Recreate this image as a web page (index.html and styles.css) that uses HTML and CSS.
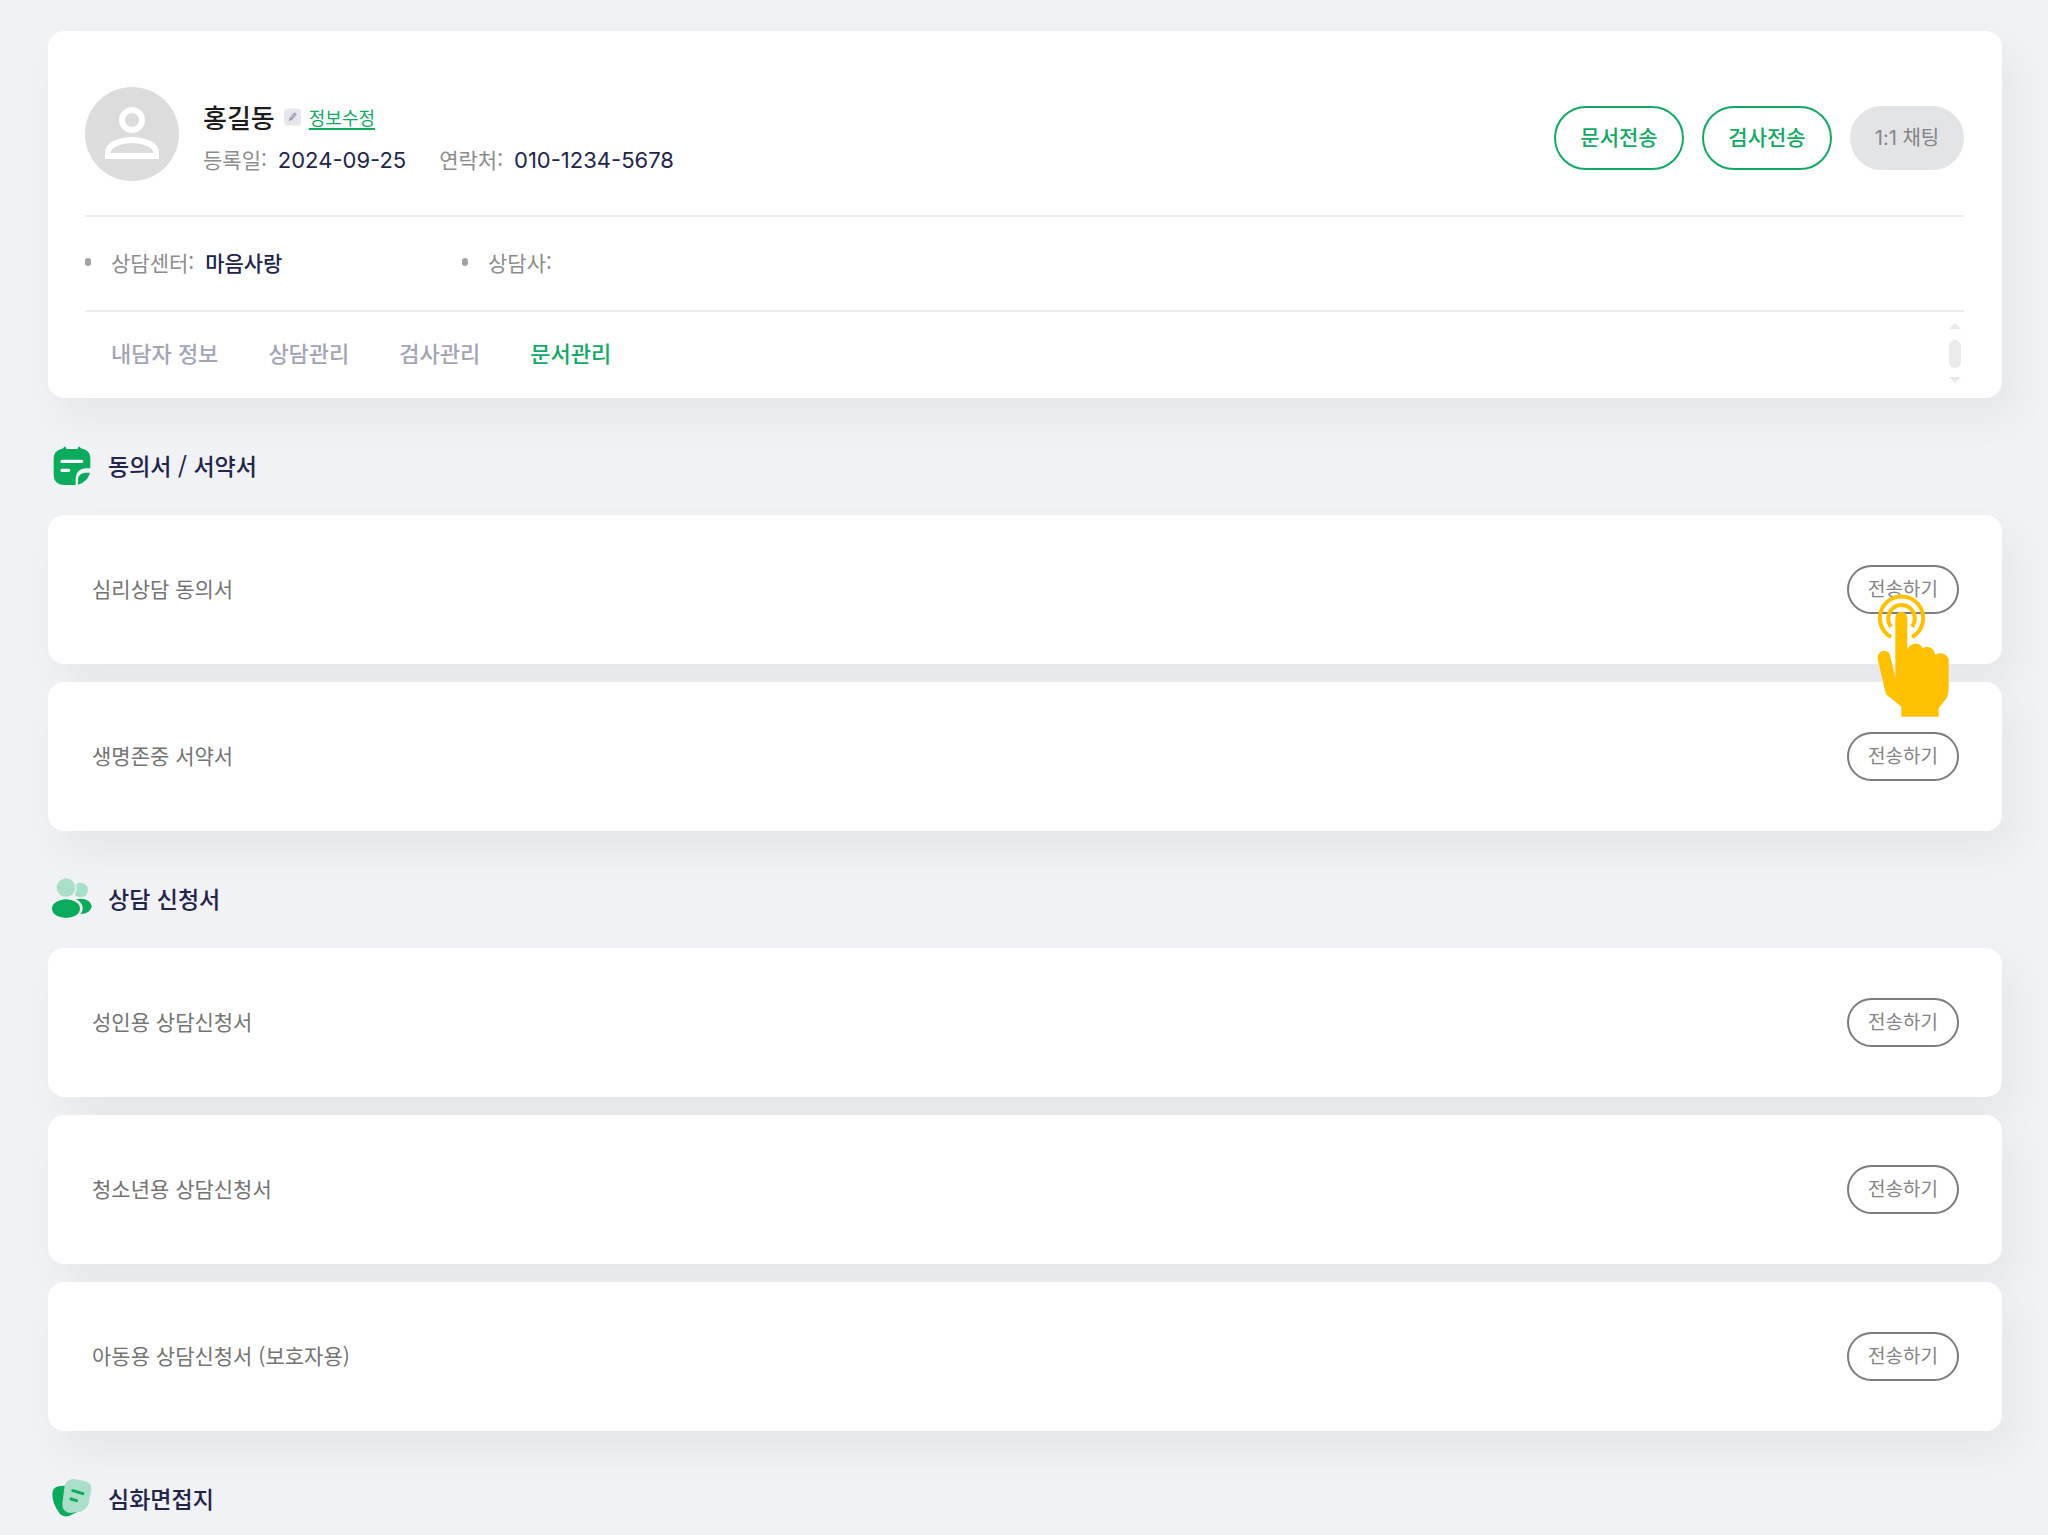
FILE: index.html
```html
<!DOCTYPE html>
<html lang="ko">
<head>
<meta charset="utf-8">
<meta name="viewport" content="width=device-width, initial-scale=1">
<title>문서관리</title>
<link rel="stylesheet" href="styles.css">
</head>
<body>
<main class="page">
  <header class="client card">
    <div class="profile">
      <svg class="avatar" viewBox="0 0 94 94" aria-hidden="true">
        <circle cx="47" cy="47" r="47" fill="#dcdcdc"/>
        <circle cx="47" cy="33" r="10" fill="none" stroke="#fff" stroke-width="6"/>
        <path d="M23 69v-4c0-8 14-12 24-12s24 4 24 12v4z" fill="none" stroke="#fff" stroke-width="6"/>
      </svg>
      <div class="profile-text">
        <div class="name-line">
          <h1 class="name">홍길동</h1>
          <svg class="edit-icon" viewBox="0 0 18 18" aria-hidden="true">
            <rect width="18" height="18" rx="4" fill="#e6e6ec"/>
            <path d="M5 13.500l1-4 5-5.500 2.500 2-5 6z" fill="#9d9db4"/>
            <path d="M7 10l4-4" stroke="#dcdce6" stroke-width="1"/>
          </svg>
          <a class="edit-link" href="#edit">정보수정</a>
        </div>
        <dl class="meta">
          <div class="pair"><dt>등록일:</dt><dd class="number">2024-09-25</dd></div>
          <div class="pair"><dt>연락처:</dt><dd class="number">010-1234-5678</dd></div>
        </dl>
      </div>
      <div class="actions">
        <button class="pill" type="button">문서전송</button>
        <button class="pill" type="button">검사전송</button>
        <button class="pill pill-muted" type="button">1:1 채팅</button>
      </div>
    </div>
    <dl class="center-info">
      <div class="pair bullet"><dt>상담센터:</dt><dd>마음사랑</dd></div>
      <div class="pair bullet"><dt>상담사:</dt><dd></dd></div>
    </dl>
    <div class="tab-row">
      <nav class="tabs">
        <a href="#client">내담자 정보</a>
        <a href="#counsel">상담관리</a>
        <a href="#exam">검사관리</a>
        <a class="active" href="#docs" aria-current="page">문서관리</a>
      </nav>
      <svg class="scroll" viewBox="0 0 12 62" aria-hidden="true">
        <path d="M0 7l6-6 6 6z" fill="#e9e9e9"/>
        <rect y="18" width="12" height="28" rx="6" fill="#e9ebea"/>
        <path d="M0 55h12l-6 6z" fill="#e9e9e9"/>
      </svg>
    </div>
  </header>

  <section>
    <h2 class="section-title">
      <svg class="section-icon" viewBox="36 44 120 120" aria-hidden="true">
        <path d="M70 54l2-4q3-3 5 1l3 5h32l3-5q2-4 5-1l2 4q29 6 29 28v32h-13q-29 1-31 30v20H72q-31-1-31-31V84q0-24 29-30z" fill="#0aab5c"/>
        <path d="M150 127h-16q-18 2-20 20v16q28-8 36-36z" fill="#0aab5c"/>
        <path d="M66 93h59M66 120h20" stroke="#fff" stroke-width="10" stroke-linecap="round"/>
      </svg>
      <span>동의서 / 서약서</span>
    </h2>
    <ul class="docs">
      <li class="doc card"><span class="doc-name">심리상담 동의서</span>
        <div class="send-wrap">
          <button class="send" type="button">전송하기</button>
          <svg class="pointer" viewBox="285 281 225 375" aria-hidden="true">
            <path d="M330 413a65 65 0 1 1 63 0" fill="none" stroke="#ffc000" stroke-width="12"/>
            <path d="M330 382a40 40 0 1 1 63 0" fill="none" stroke="#ffc000" stroke-width="12"/>
            <path d="M343 355a18 18 0 0 1 36 0v97c7-23 37-27 46-5 11-8 34-5 38 20 17-12 38 0 40 15v85q0 20-8 32l-22 27v26H361v-30l-46-37-25-105c-3-28 31-34 37-13l16 70z" fill="#ffc000"/>
          </svg>
        </div>
      </li>
      <li class="doc card"><span class="doc-name">생명존중 서약서</span><button class="send" type="button">전송하기</button></li>
    </ul>
  </section>

  <section>
    <h2 class="section-title">
      <svg class="section-icon" viewBox="36 54 120 120" aria-hidden="true">
        <ellipse cx="122" cy="90" rx="22" ry="22" fill="#a9dfc8"/>
        <circle cx="78" cy="83" r="32" fill="#f0f2f6"/>
        <circle cx="78" cy="83" r="28" fill="#a9dfc8"/>
        <ellipse cx="122" cy="139" rx="33" ry="23" fill="#0aab5c"/>
        <ellipse cx="79" cy="145" rx="49" ry="34" fill="#f0f2f6"/>
        <ellipse cx="78" cy="146" rx="42" ry="28" fill="#0aab5c"/>
      </svg>
      <span>상담 신청서</span>
    </h2>
    <ul class="docs">
      <li class="doc card"><span class="doc-name">성인용 상담신청서</span><button class="send" type="button">전송하기</button></li>
      <li class="doc card"><span class="doc-name">청소년용 상담신청서</span><button class="send" type="button">전송하기</button></li>
      <li class="doc card"><span class="doc-name">아동용 상담신청서 (보호자용)</span><button class="send" type="button">전송하기</button></li>
    </ul>
  </section>

  <section>
    <h2 class="section-title">
      <svg class="section-icon" viewBox="36 60 120 120" aria-hidden="true">
        <path d="M37 108q0-19 18-23l50-5 20 76-38 18q-22 5-31-12-19-26-19-54z" fill="#0aab5c"/>
        <path d="M74 82q8-20 28-19l28 5q26 5 24 26l-8 42q-6 20-26 25l-28 4q-26-2-25-28z" fill="#a9dfc8"/>
        <path d="M98 98l31 9M93 123l17 5" stroke="#0aab5c" stroke-width="9" stroke-linecap="round"/>
      </svg>
      <span>심화면접지</span>
    </h2>
  </section>
</main>
</body>
</html>
```
FILE: styles.css
```css
* {
  box-sizing: border-box;
}

body {
  margin: 0;
  background: #f0f2f6;
  color: #22244a;
  font-family: "Noto Sans CJK KR", sans-serif;
  font-size: 21px;
  line-height: 32px;
}

h1, h2, dl, dd, ul {
  margin: 0;
  padding: 0;
}

a {
  color: inherit;
  text-decoration: none;
}

button {
  font-family: inherit;
  cursor: pointer;
}

.page {
  padding: 31px 46px 0 48px;
}

.card {
  background: #fff;
  border-radius: 16px;
  box-shadow: 12px 20px 40px rgba(0, 0, 0, 0.05);
}

.client {
  padding: 0 38px 0 37px;
}

/* Profile */
.profile {
  display: flex;
  align-items: center;
  padding: 56px 0 34px;
  border-bottom: 2px solid #ececec;
}

.avatar {
  width: 94px;
  height: 94px;
}

.profile-text {
  flex: 1;
  padding: 6px 0 0 24px;
}

.name-line {
  display: flex;
  align-items: center;
  height: 36px;
  margin-bottom: 8px;
}

.name {
  color: #1c1c1c;
  font-size: 26px;
  font-weight: 500;
}

.edit-icon {
  width: 17px;
  height: 18px;
  margin: 0 8px 0 9px;
}

.edit-link {
  color: #14a866;
  font-size: 18px;
  text-decoration: underline;
  text-decoration-thickness: 2px;
  text-underline-offset: 3px;
}

.meta {
  display: flex;
  gap: 33px;
}

.pair {
  display: flex;
  gap: 11px;
}

dt {
  color: #8c8c8c;
}

dd {
  font-weight: 500;
}

.number {
  padding-top: 1px;
  font-family: Inter, "Noto Sans CJK KR", sans-serif;
  font-size: 22px;
  font-weight: 400;
}

.actions {
  display: flex;
  gap: 18px;
  padding-top: 8px;
}

.pill {
  width: 130px;
  height: 64px;
  padding: 0 0 4px;
  border: 2px solid #14a866;
  border-radius: 32px;
  background: #fff;
  color: #14a866;
  font-size: 21px;
  font-weight: 500;
}

.pill-muted {
  width: 114px;
  border-color: #e3e4e5;
  background: #e3e4e5;
  color: #858585;
  font-family: Inter, "Noto Sans CJK KR", sans-serif;
  font-size: 20px;
  font-weight: 400;
}

/* Counselling centre */
.center-info {
  display: grid;
  grid-template-columns: 377px 1fr;
  padding: 29px 0 32px;
  border-bottom: 2px solid #ececec;
}

.bullet {
  align-items: center;
}

.bullet::before {
  content: "";
  width: 6px;
  height: 8px;
  margin-right: 9px;
  border-radius: 3px;
  background: #a2a2a2;
}

/* Tabs */
.tab-row {
  display: flex;
  align-items: flex-start;
  justify-content: space-between;
  padding: 10px 3px 14px 26px;
}

.tabs {
  display: flex;
  gap: 50px;
  padding-top: 14px;
  color: #a3a5b7;
  font-size: 22px;
  font-weight: 500;
}

.tabs .active {
  color: #14a866;
}

.scroll {
  width: 12px;
  height: 62px;
}

/* Document sections */
.section-title {
  display: flex;
  align-items: center;
  gap: 16px;
  padding: 47px 0 30px 4px;
  font-size: 23px;
  font-weight: 500;
  line-height: 40px;
}

.section-icon {
  width: 40px;
  height: 40px;
}

.docs {
  display: grid;
  gap: 18px;
  list-style: none;
}

.doc {
  display: flex;
  align-items: center;
  justify-content: space-between;
  padding: 50px 43px 50px 44px;
  color: #737373;
}

.doc-name {
  padding-bottom: 4px;
}

.send-wrap {
  position: relative;
  display: flex;
}

.send {
  height: 49px;
  padding: 0 19px 5px;
  border: 2px solid #7c7c7f;
  border-radius: 25px;
  background: #fff;
  color: #838388;
  font-size: 19px;
}

.pointer {
  position: absolute;
  top: 28px;
  left: 29px;
  z-index: 1;
  width: 75px;
  height: 125px;
}
```
